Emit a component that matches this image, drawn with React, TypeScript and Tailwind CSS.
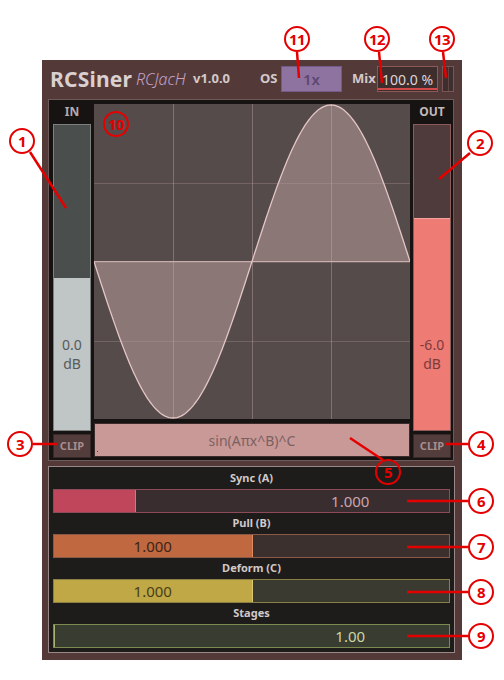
import React from 'react';

type Slider = {
  label: string;
  value: string;
  fill: number;
  border: string;
  fillColor: string;
  empty: string;
  text: string;
  edge: string;
};

const sliders: Slider[] = [
  { label: 'Sync (A)', value: '1.000', fill: 20.4, border: 'border-[#8d4a59]', fillColor: 'bg-[#c0475b]', empty: 'bg-[#3a2d2f]', text: 'text-[#cba4ac]', edge: 'bg-[#e07080]' },
  { label: 'Pull (B)', value: '1.000', fill: 50, border: 'border-[#8b5a47]', fillColor: 'bg-[#c0683f]', empty: 'bg-[#3b302d]', text: 'text-[#3d2418]', edge: 'bg-[#e08a60]' },
  { label: 'Deform (C)', value: '1.000', fill: 50, border: 'border-[#8a8046]', fillColor: 'bg-[#bfa845]', empty: 'bg-[#3b3a31]', text: 'text-[#4a4019]', edge: 'bg-[#dcc870]' },
  { label: 'Stages', value: '1.00', fill: 0, border: 'border-[#7a8b4d]', fillColor: 'bg-[#a6b46f]', empty: 'bg-[#383c31]', text: 'text-[#cbd4a3]', edge: 'bg-[#a6b46f]' },
];

const markers = [
  { n: '1', x: 22, y: 141 },
  { n: '2', x: 480, y: 143 },
  { n: '3', x: 20, y: 444 },
  { n: '4', x: 481, y: 444 },
  { n: '5', x: 388, y: 472 },
  { n: '6', x: 481, y: 501 },
  { n: '7', x: 481, y: 547 },
  { n: '8', x: 481, y: 592 },
  { n: '9', x: 481, y: 636 },
  { n: '10', x: 116, y: 124 },
  { n: '11', x: 297, y: 39 },
  { n: '12', x: 377, y: 39 },
  { n: '13', x: 442, y: 39 },
];

const leaders = [
  [30, 152, 66, 208],
  [470, 153, 439, 179],
  [33, 444, 58, 444],
  [445, 444, 468, 444],
  [350, 438, 383, 460],
  [407, 501, 468, 501],
  [407, 547, 468, 547],
  [407, 592, 468, 592],
  [407, 636, 468, 636],
  [297, 52, 299, 78],
  [379, 52, 382, 83],
  [443, 52, 446, 78],
];

const W = 316;
const H = 315;

function curvePoints() {
  const pts: string[] = [];
  for (let i = 0; i <= 240; i++) {
    const t = i / 240;
    const x = t * W;
    const y = H / 2 - (H / 2 - 1) * Math.sin(Math.PI * (2 * t - 1));
    pts.push(`${x.toFixed(2)},${y.toFixed(2)}`);
  }
  return pts;
}

function Graph() {
  const pts = curvePoints();
  const line = 'M' + pts.join(' L');
  const area = `M0,${H / 2} L${pts.join(' L')} L${W},${H / 2} Z`;
  const q = [79, 158, 237];

  return (
    <svg width={W} height={H} viewBox={`0 0 ${W} ${H}`} className="block">
      <rect x="0" y="0" width={W} height={H} fill="#564b4b" />
      <path d={area} fill="#8b7776" />
      {q.map((v) => (
        <line key={`h${v}`} x1="0" x2={W} y1={v + 0.5} y2={v + 0.5} stroke="rgba(190,160,160,0.28)" strokeWidth="1" />
      ))}
      {q.map((v) => (
        <line key={`v${v}`} x1={v + 0.5} x2={v + 0.5} y1="0" y2={H} stroke="rgba(205,175,175,0.38)" strokeWidth="1" />
      ))}
      <line x1="0" x2={W} y1={H / 2} y2={H / 2} stroke="#c9aeae" strokeWidth="1" />
      <path d={line} fill="none" stroke="#e4c6c6" strokeWidth="1.3" />
    </svg>
  );
}

function Meter({ side }: { side: 'in' | 'out' }) {
  const isIn = side === 'in';
  const txt = isIn ? 'text-[#565b5b]' : 'text-[#7d3a3a]';
  return (
    <div className="flex w-[38px] flex-col">
      <div className={`flex h-[24px] items-center justify-center text-[12px] font-bold ${isIn ? 'text-[#b3abab]' : 'text-[#c2b9b9]'}`}>
        {isIn ? 'IN' : 'OUT'}
      </div>
      <div className={`relative h-[307px] border ${isIn ? 'border-[#7c817f] bg-[#4a4e4c]' : 'border-[#8e5b5b] bg-[#4f3b3b]'}`}>
        <div
          className={`absolute inset-x-0 bottom-0 ${isIn ? 'bg-[#c0c5c5]' : 'border-t border-[#f4a4a0] bg-[#ee7b74]'}`}
          style={{ height: isIn ? '50%' : '69.5%' }}
        />
        <div className="absolute inset-x-0 bottom-0 flex h-1/2 flex-col items-center justify-center">
          <span className={`text-[14px] leading-[19px] ${txt}`}>{isIn ? '0.0' : '-6.0'}</span>
          <span className={`text-[14px] leading-[19px] ${txt}`}>dB</span>
        </div>
      </div>
      <div className="mt-[3px] flex h-[24px] items-center justify-center border border-[#3a2828] bg-[#533c3c] text-[11px] font-bold text-[#a68e8e]">
        CLIP
      </div>
    </div>
  );
}

export default function App() {
  return (
    <div className="relative h-[680px] w-[504px] overflow-hidden bg-white font-['Noto_Sans',sans-serif]">
      <div className="pl-[42px] pt-[60px]">
        <div className="h-[600px] w-[420px] bg-[#533a39]">
          <header className="flex h-[38px] items-center pl-[8px] whitespace-nowrap">
            <div className="w-[86px] text-[21px] font-bold leading-none tracking-[0.2px] text-[#dad0d0]">RCSiner</div>
            <div className="w-[57px] text-[16px] font-light italic leading-none text-[#c6a0c8]">RCJacH</div>
            <div className="w-[67px] text-[13px] font-bold text-[#d3c9c9]">v1.0.0</div>
            <div className="w-[21px] text-[13px] font-bold text-[#d3c9c9]">OS</div>
            <div className="flex h-[26px] w-[61px] items-center justify-center border border-[#725b86] bg-[#8e73a0] text-[15px] font-semibold text-[#5b4872]">
              1x
            </div>
            <div className="ml-[10px] w-[25px] text-[13px] font-bold text-[#d3c9c9]">Mix</div>
            <div className="relative flex h-[26px] w-[61px] items-center justify-center border border-[#8c5858] bg-[#3d2d2d] text-[14px] text-[#ddd4d4]">
              100.0 %
              <div className="absolute inset-x-0 bottom-[1px] h-[2px] bg-[#d24a4a]" />
            </div>
            <div className="ml-[4px] flex h-[26px] w-[12px] justify-center border border-[#7c5656] bg-[#3f2e2e]">
              <div className="h-full w-[1px] bg-[#5e4747]" />
            </div>
          </header>

          <section className="ml-[6px] mt-[1px] flex h-[362px] w-[406px] border border-[#6d5b5b] bg-[#171313]">
            <div className="ml-[4px]">
              <Meter side="in" />
            </div>
            <div className="ml-[3px] flex w-[316px] flex-col">
              <div className="mt-[4px]">
                <Graph />
              </div>
              <div className="relative mt-[4px] flex h-[34px] items-center justify-center border border-[#3b2b2b] bg-[#c99997] text-[14px] text-[#7b6161]">
                sin(Aπx^B)^C
                <div className="absolute bottom-[4px] left-[2px] h-[1px] w-[1px] bg-[#5a4040]" />
              </div>
            </div>
            <div className="ml-[3px]">
              <Meter side="out" />
            </div>
          </section>

          <section className="ml-[6px] mt-[5px] w-[407px] border border-[#9a8888] bg-[#1e1c1b] px-[4px] pb-[4px] pt-[1px]">
            {sliders.map((s) => (
              <div key={s.label}>
                <div className="flex h-[21px] items-center justify-center text-[11px] font-bold text-[#d2c9c9]">{s.label}</div>
                <div className={`relative flex h-[24px] border ${s.border} ${s.empty}`}>
                  <div className={`absolute inset-y-0 left-0 ${s.fillColor}`} style={{ width: `${s.fill}%` }} />
                  <div className={`absolute inset-y-0 w-[1px] ${s.edge}`} style={{ left: `${s.fill}%` }} />
                  <div className={`relative flex flex-1 items-center justify-center text-[15px] ${s.text}`}>
                    {s.fill >= 50 ? s.value : ''}
                  </div>
                  <div className={`relative flex flex-1 items-center justify-center text-[15px] ${s.text}`}>
                    {s.fill < 50 ? s.value : ''}
                  </div>
                </div>
              </div>
            ))}
          </section>
        </div>
      </div>

      <svg className="pointer-events-none absolute inset-0" width="504" height="680">
        {leaders.map(([x1, y1, x2, y2], i) => (
          <line key={i} x1={x1} y1={y1} x2={x2} y2={y2} stroke="#e50000" strokeWidth="2.5" />
        ))}
      </svg>
      {markers.map((m) => (
        <div
          key={m.n}
          className="pointer-events-none absolute flex h-[26px] w-[26px] items-center justify-center rounded-full border-2 border-[#e50000] text-[15px] font-bold leading-none tracking-[-0.5px] text-[#e50000]"
          style={{ left: m.x - 13, top: m.y - 13 }}
        >
          {m.n}
        </div>
      ))}
    </div>
  );
}
